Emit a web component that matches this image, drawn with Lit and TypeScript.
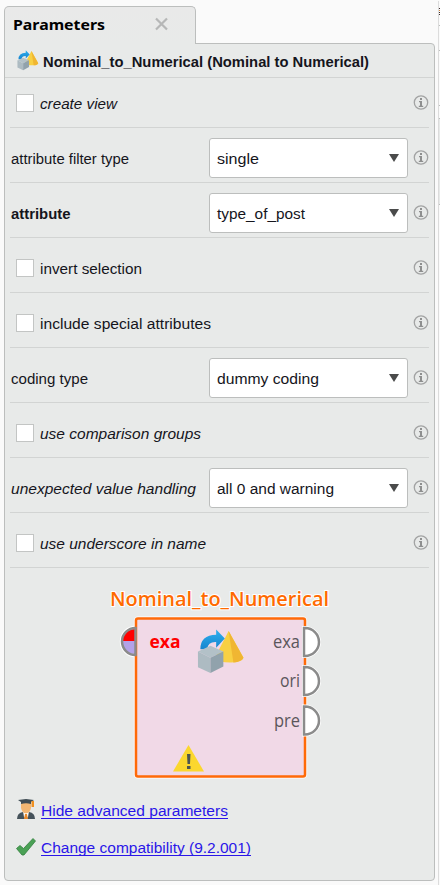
import { LitElement, html, svg, css, nothing } from "lit";
import { customElement } from "lit/decorators.js";
import { classMap } from "lit/directives/class-map.js";

interface Param {
  label: string;
  w: number;
  style?: "italic" | "bold";
  value?: string;
  vw?: number;
}

const params: Param[] = [
  { label: "create view", w: 77, style: "italic" },
  { label: "attribute filter type", w: 118, value: "single", vw: 42 },
  { label: "attribute", w: 59.5, style: "bold", value: "type_of_post", vw: 88 },
  { label: "invert selection", w: 102 },
  { label: "include special attributes", w: 171 },
  { label: "coding type", w: 77, value: "dummy coding", vw: 102 },
  { label: "use comparison groups", w: 161, style: "italic" },
  { label: "unexpected value handling", w: 185, style: "italic", value: "all 0 and warning", vw: 117 },
  { label: "use underscore in name", w: 166, style: "italic" },
];

/* One line of text fitted to a fixed advance width. */
const fit = (text: string, w: number, cls = "") => html`<svg class="fit ${cls}" width=${w} height="20">
  <text x="0" y="16" textLength=${w} lengthAdjust="spacingAndGlyphs">${text}</text>
</svg>`;

const convertIcon = (size: number) => html`<svg width=${size} height=${size} viewBox="0 0 48 48">
  <defs>
    <linearGradient id="arrow" x1="0" y1="0" x2="0" y2="1"><stop offset="0" stop-color="#2fb0ee" /><stop offset="1" stop-color="#1685cf" /></linearGradient>
  </defs>
  <path d="M33 2 L48.500 30 Q47 35 35 35 Q22 35 18 31 Z" fill="#f8d043" />
  <path d="M33 2 L48.500 30 Q47 34 38 35 Z" fill="#f0b632" />
  <path d="M3.500 21 Q3.500 6.500 20 6 V0.500 L29 10 L20 19.500 V13.500 Q11.500 13 10.500 21 Z" fill="url(#arrow)" />
  <path d="M1 23.500 L14 17.500 L27.500 23.500 L14 30 Z" fill="#b3c1c8" />
  <path d="M1 23.500 L14 30 V46 L1 40 Z" fill="#adbbc2" />
  <path d="M27.500 23.500 L14 30 V46 L27.500 39 Z" fill="#91a2ac" />
</svg>`;

const infoIcon = html`<svg class="info" width="16" height="16" viewBox="0 0 16 16">
  <circle cx="8" cy="7.500" r="6.700" fill="none" stroke="#a2a3a3" stroke-width="1.300" />
  <rect x="7" y="3" width="2" height="2" fill="#8e8f8f" />
  <path d="M6 6 H9 V10.700 H10.200 V12 H5.800 V10.700 H7 V7.200 H6 Z" fill="#8e8f8f" />
</svg>`;

@customElement("app-root")
export class AppRoot extends LitElement {
  static styles = css`
    :host {
      display: block;
      position: relative;
      box-sizing: border-box;
      height: 885px;
      padding: 6px 5px 4px 4px;
      overflow: hidden;
      background: #fafafa;
      font-family: "Liberation Sans", Arial, sans-serif;
      font-size: 14.7px;
      color: #15151c;
    }
    svg { display: block; flex: none; overflow: visible; }
    .tab {
      position: relative;
      z-index: 1;
      box-sizing: border-box;
      width: 192px;
      height: 38px;
      padding: 7px 0 0 8px;
      display: flex;
      gap: 50px;
      background: linear-gradient(#e9e9e9, #e8eae9);
      border: 1px solid #bcbebd;
      border-width: 1.5px 1.5px 0 1.5px;
      border-radius: 5px 5px 0 0;
    }
    .tab text { font: bold 15px "Noto Sans", "Open Sans", sans-serif; fill: #000; }
    .close { margin-top: 3px; }
    .panel {
      box-sizing: border-box;
      height: 838px;
      margin-top: -1px;
      border: 1.5px solid #bcbebd;
      border-radius: 0 4px 4px 4px;
      background: #e8eae9;
    }
    .head {
      box-sizing: border-box;
      height: 34px;
      display: flex;
      align-items: center;
      gap: 5px;
      padding-left: 12px;
      border-bottom: 1px solid #d2d4d3;
    }
    .rows { padding: 0 5px; }
    .row {
      box-sizing: border-box;
      height: 55px;
      padding-top: 6px;
      display: flex;
      align-items: center;
      justify-content: space-between;
      border-bottom: 1px solid #d2d4d3;
    }
    .row.first { height: 50px; padding-top: 0; }
    .left { display: flex; align-items: center; gap: 6px; padding-left: 1px; }
    .check .left { padding-left: 6px; }
    .box { box-sizing: border-box; width: 18px; height: 18px; background: #fff; border: 1px solid #c3c5c4; }
    .right { display: flex; align-items: center; gap: 5px; }
    .select {
      box-sizing: border-box;
      width: 199px;
      height: 40px;
      padding: 0 8px 0 6.5px;
      display: flex;
      align-items: center;
      justify-content: space-between;
      background: #fff;
      border: 1px solid #bcbebd;
      border-radius: 3px;
    }
    .fit text { fill: #15151c; }
    .tab .fit text { fill: #000; }
    .bold text { font-weight: bold; }
    .italic text { font-style: italic; }
    .canvas { margin: 15px 0 0 100px; }
    .canvas text { font-family: "Open Sans", "Noto Sans", sans-serif; }
    .links { padding: 18px 0 0 11px; display: flex; flex-direction: column; gap: 16px; }
    .link { display: flex; gap: 5px; align-items: center; height: 21px; }
    .link .fit { border-bottom: 1px solid #2a16e8; height: 18px; margin-bottom: 1px; }
    .link .fit text { fill: #2a16e8; }
    .edge { position: absolute; right: 0; top: 0; }
  `;

  row(p: Param, i: number) {
    const check = !p.value;
    return html`<div class=${classMap({ row: true, first: i === 0, check })}>
      <div class="left">
        ${check ? html`<span class="box"></span>` : nothing}${fit(p.label, p.w, p.style ?? "")}
      </div>
      <div class="right">
        ${p.value
          ? html`<div class="select">
              ${fit(p.value, p.vw!)}
              <svg width="10" height="8" viewBox="0 0 10 8"><path d="M0 0 H10 L5 8 Z" fill="#4a4b4b" /></svg>
            </div>`
          : nothing}
        ${infoIcon}
      </div>
    </div>`;
  }

  operator() {
    const port = (y: number, name: string, w: number) => svg`
      <path d=${`M199 ${y - 14} V${y + 14} H200 A14 14 0 0 0 200 ${y - 14} Z`} fill="#fff" stroke="#fff" stroke-width="4" />
      <path d=${`M199 ${y - 14} V${y + 14} H200 A14 14 0 0 0 200 ${y - 14} Z`} fill="#fff" stroke="#8b8b8b" stroke-width="2.500" />
      <text x=${195 - w} y=${y + 6} font-size="18" fill="#5b565b" textLength=${w} lengthAdjust="spacingAndGlyphs">${name}</text>`;
    return html`<svg class="canvas" width="230" height="198" viewBox="0 0 230 198">
      <text x="5" y="23" font-size="19.500" font-weight="600" fill="#ff6a00" stroke="#fff" stroke-width="2" paint-order="stroke"
        textLength="219" lengthAdjust="spacingAndGlyphs">Nominal_to_Numerical</text>
      <path d="M30.500 45 A13.500 13.500 0 0 0 30.500 72 Z" fill="#fff" stroke="#fff" stroke-width="4.500" />
      <rect x="31" y="35.500" width="169" height="158" rx="2" fill="none" stroke="#fff" stroke-opacity=".7" stroke-width="4.500" />
      <rect x="31" y="35.500" width="169" height="158" rx="2" fill="#f1d9e7" stroke="#ff6a08" stroke-width="2.500" />
      <path d="M30 46 A13 13 0 0 0 17 58 H30 Z" fill="#f00" />
      <path d="M30 71 A13 13 0 0 1 17 58 H30 Z" fill="#b3a2e8" />
      <path d="M30.500 45 A13.500 13.500 0 0 0 30.500 72 Z" fill="none" stroke="#8b8b8b" stroke-width="2.500" />
      <text x="44.500" y="64.500" font-size="17" font-weight="bold" fill="#f00" textLength="31" lengthAdjust="spacingAndGlyphs">exa</text>
      <g transform="translate(92 46)">${convertIcon(46)}</g>
      ${port(59, "exa", 27)}${port(98, "ori", 20)}${port(137.5, "pre", 26)}
      <path d="M83.500 162 L99 188.500 H68 Z" fill="#fbd72e" />
      <path d="M82 171 H85.500 L85 181 H82.500 Z M82 183 H85.500 V186 H82 Z" fill="#4d5650" />
    </svg>`;
  }

  render() {
    return html`
      <div class="tab">
        ${fit("Parameters", 92)}
        <svg class="close" width="14" height="14" viewBox="0 0 14 14"><path d="M1 1.500 L12 12.500 M12 1.500 L1 12.500" stroke="#b6b7b7" stroke-width="2.200" /></svg>
      </div>
      <div class="panel">
        <div class="head">${convertIcon(21)}${fit("Nominal_to_Numerical (Nominal to Numerical)", 326, "bold")}</div>
        <div class="rows">${params.map((p, i) => this.row(p, i))}</div>
        ${this.operator()}
        <div class="links">
          <div class="link">
            <svg width="20" height="21" viewBox="0 0 20 21">
              <path d="M1 20 Q1 14 7 13 H13 Q19 14 19 20 Z" fill="#45525a" />
              <path d="M7 12 H13 L12 18 L10 20 L8 18 Z" fill="#fff" />
              <path d="M9 15 H11 L12 20 H8 Z" fill="#e88a2c" />
              <path d="M5 3 H15 V9 Q14 14 10 14.500 Q6 14 5 9 Z" fill="#f2b673" />
              <path d="M2 1 L10 0 L18 1 L15 3 V5 Q10 3.500 5 5 V3 Z" fill="#3f4c54" />
              <path d="M15.500 2 H18 V8 H15.500 Z" fill="#f09020" />
            </svg>
            ${fit("Hide advanced parameters", 187)}
          </div>
          <div class="link">
            <svg width="20" height="18" viewBox="0 0 20 18"><path d="M.5 10.500 L4 7.500 L7.500 10.500 L17 .5 L19.500 3 L8 17 H6 Z" fill="#4aa155" stroke="#327f3e" stroke-width=".8" /></svg>
            ${fit("Change compatibility (9.2.001)", 210)}
          </div>
        </div>
      </div>
      <svg class="edge" width="2" height="885">
        <path d="M1 118 H2 V204 H1 Z" fill="#e8eae9" />
        <path d="M.5 1 V885" stroke="#dcdcdc" />
        <path d="M1 8.500 H2 M1 12.500 H2 M1 14.500 H2" stroke="#3b2a2a" />
        <path d="M1 10.500 H2" stroke="#d98a3c" />
        <path d="M1 25.500 H2 M1 50.500 H2 M1 105.500 H2 M1 118.500 H2 M1 204.500 H2" stroke="#bcbebd" />
      </svg>
    `;
  }
}
